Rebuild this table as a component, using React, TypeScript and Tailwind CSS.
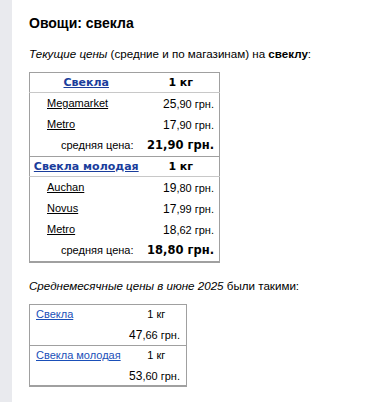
import React from "react"

type Shop = { name: string; whole: string; frac: string }

type Group = {
    title: string
    shops: Shop[]
    avg: string
}

const groups: Group[] = [
    {
        title: "Свекла",
        shops: [
            { name: "Megamarket", whole: "25", frac: ",90 грн." },
            { name: "Metro", whole: "17", frac: ",90 грн." },
        ],
        avg: "21,90 грн.",
    },
    {
        title: "Свекла молодая",
        shops: [
            { name: "Auchan", whole: "19", frac: ",80 грн." },
            { name: "Novus", whole: "17", frac: ",99 грн." },
            { name: "Metro", whole: "18", frac: ",62 грн." },
        ],
        avg: "18,80 грн.",
    },
]

const monthly = [
    { name: "Свекла", whole: "47", frac: ",66 грн." },
    { name: "Свекла молодая", whole: "53", frac: ",60 грн." },
]

function Price({ whole, frac }: { whole: string; frac: string }) {
    return (
        <span className="whitespace-nowrap">
            <span className="text-[12px]">{whole}</span>
            <span className="text-[11px]">{frac}</span>
        </span>
    )
}

export default function App() {
    return (
        <div className="flex min-h-[402px] bg-white font-['Liberation_Sans',Arial,sans-serif] text-black">
            {/* left gray strip */}
            <div className="w-[12px] shrink-0 bg-[#e9eaee]" />

            <div className="flex-1 pl-[17px] pt-[15px]">
                <h1 className="text-[14px] font-bold leading-[17px]">Овощи: свекла</h1>

                <p className="mt-[14px] text-[11.6px] leading-[16px]">
                    <i>Текущие цены</i> (средние и по магазинам) на <b>свеклу</b>:
                </p>

                <table className="mt-[10px] w-[190px] table-fixed border-collapse border border-b-2 border-[#a0a0a0]">
                    <colgroup>
                        <col className="w-[113px]" />
                        <col className="w-[77px]" />
                    </colgroup>
                    {groups.map((g, gi) => (
                        <tbody key={gi} className="border-t border-[#a0a0a0]">
                            <tr className="h-[20px] border-b border-[#c8c8c8] font-['DejaVu_Sans',Verdana,sans-serif] text-[11px] font-bold leading-[14px]">
                                <td className="text-center whitespace-nowrap">
                                    <a href="#" className="text-[#1a3d9c] underline">
                                        {g.title}
                                    </a>
                                </td>
                                <td className="text-center">1 кг</td>
                            </tr>
                            {g.shops.map((s, si) => (
                                <tr key={si} className="h-[21px]">
                                    <td className="pl-[17px] text-[11px] leading-[14px]">
                                        <a href="#" className="text-black underline">
                                            {s.name}
                                        </a>
                                    </td>
                                    <td className="pr-[5px] text-right leading-[14px]">
                                        <Price whole={s.whole} frac={s.frac} />
                                    </td>
                                </tr>
                            ))}
                            <tr className="h-[22px]">
                                <td className="pr-[9px] text-right text-[11px] leading-[14px]">средняя цена:</td>
                                <td className="pr-[5px] text-right font-['DejaVu_Sans',Verdana,sans-serif] text-[11.5px] font-bold leading-[14px] whitespace-nowrap">
                                    {g.avg}
                                </td>
                            </tr>
                        </tbody>
                    ))}
                </table>

                <p className="mt-[15px] text-[11.6px] leading-[16px]">
                    <i>Среднемесячные цены в июне 2025</i> были такими:
                </p>

                <table className="mt-[10px] w-[157px] table-fixed border-collapse border border-b-2 border-[#a0a0a0]">
                    <colgroup>
                        <col className="w-[97px]" />
                        <col className="w-[60px]" />
                    </colgroup>
                    {monthly.map((m, mi) => (
                        <tbody key={mi} className="border-t border-[#a0a0a0]">
                            <tr className="h-[20px]">
                                <td className="pl-[6px] text-[11px] leading-[14px] whitespace-nowrap">
                                    <a href="#" className="text-[#1a4fb8] underline">
                                        {m.name}
                                    </a>
                                </td>
                                <td className="text-center text-[11px] leading-[14px]">1 кг</td>
                            </tr>
                            <tr className="h-[21px]">
                                <td colSpan={2} className="pr-[6px] text-right leading-[14px]">
                                    <Price whole={m.whole} frac={m.frac} />
                                </td>
                            </tr>
                        </tbody>
                    ))}
                </table>
            </div>
        </div>
    )
}
